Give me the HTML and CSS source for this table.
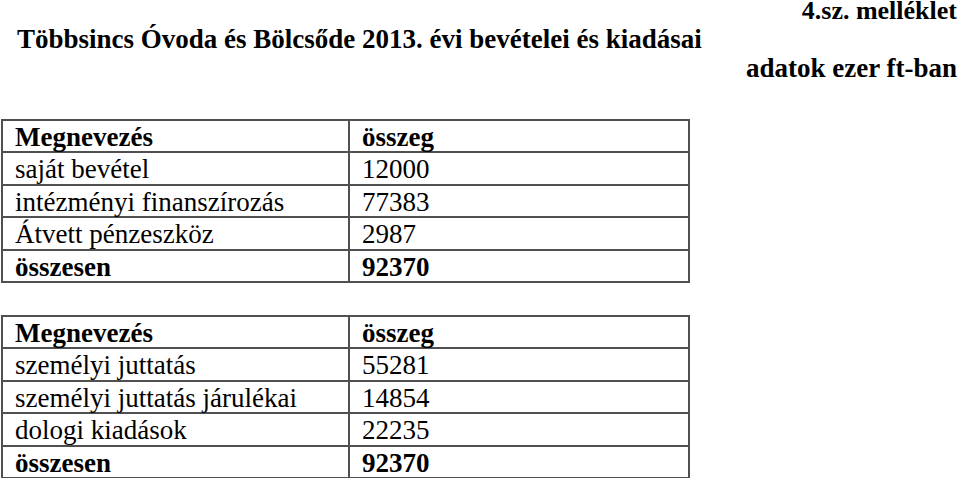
FILE: index.html
```html
<!DOCTYPE html>
<html lang="hu">
<head>
<meta charset="utf-8">
<title>4.sz. melléklet</title>
<link rel="stylesheet" href="styles.css">
</head>
<body>
<div class="page">
  <div class="annex">4.sz. melléklet</div>
  <h1 class="title">Többsincs Óvoda és Bölcsőde 2013. évi bevételei és kiadásai</h1>
  <div class="unit">adatok ezer ft-ban</div>

  <table class="tbl">
    <tr class="head"><td>Megnevezés</td><td>összeg</td></tr>
    <tr><td>saját bevétel</td><td>12000</td></tr>
    <tr><td>intézményi finanszírozás</td><td>77383</td></tr>
    <tr><td>Átvett pénzeszköz</td><td>2987</td></tr>
    <tr class="total"><td>összesen</td><td>92370</td></tr>
  </table>

  <table class="tbl second">
    <tr class="head"><td>Megnevezés</td><td>összeg</td></tr>
    <tr><td>személyi juttatás</td><td>55281</td></tr>
    <tr><td>személyi juttatás járulékai</td><td>14854</td></tr>
    <tr><td>dologi kiadások</td><td>22235</td></tr>
    <tr class="total"><td>összesen</td><td>92370</td></tr>
  </table>
</div>
</body>
</html>
```

FILE: styles.css
```css
html, body {
  margin: 0;
  padding: 0;
  background: #ffffff;
}
body {
  font-family: "Liberation Serif", "Times New Roman", serif;
  color: #000;
  font-size: 27px;
}
.page {
  width: 960px;
  height: 478px;
  overflow: hidden;
}
.annex {
  font-size: 26px;
  font-weight: bold;
  text-align: right;
  line-height: 22px;
  padding-right: 3px;
}
.title {
  margin: 0;
  font-size: 27px;
  font-weight: bold;
  line-height: 35px;
  padding-left: 17px;
}
.unit {
  font-weight: bold;
  text-align: right;
  line-height: 22px;
  padding-right: 3px;
}
.tbl {
  border-collapse: collapse;
  margin-left: 1px;
  margin-top: 40px;
  width: 689px;
}
.tbl.second {
  margin-top: 32px;
}
.tbl td {
  border: 2px solid #505050;
  padding: 3px 0 0 12px;
  line-height: 27.4px;
  height: 27.4px;
  vertical-align: top;
  white-space: nowrap;
}
.tbl td:first-child {
  width: 333px;
}
.tbl .head td,
.tbl .total td {
  font-weight: bold;
}
```
